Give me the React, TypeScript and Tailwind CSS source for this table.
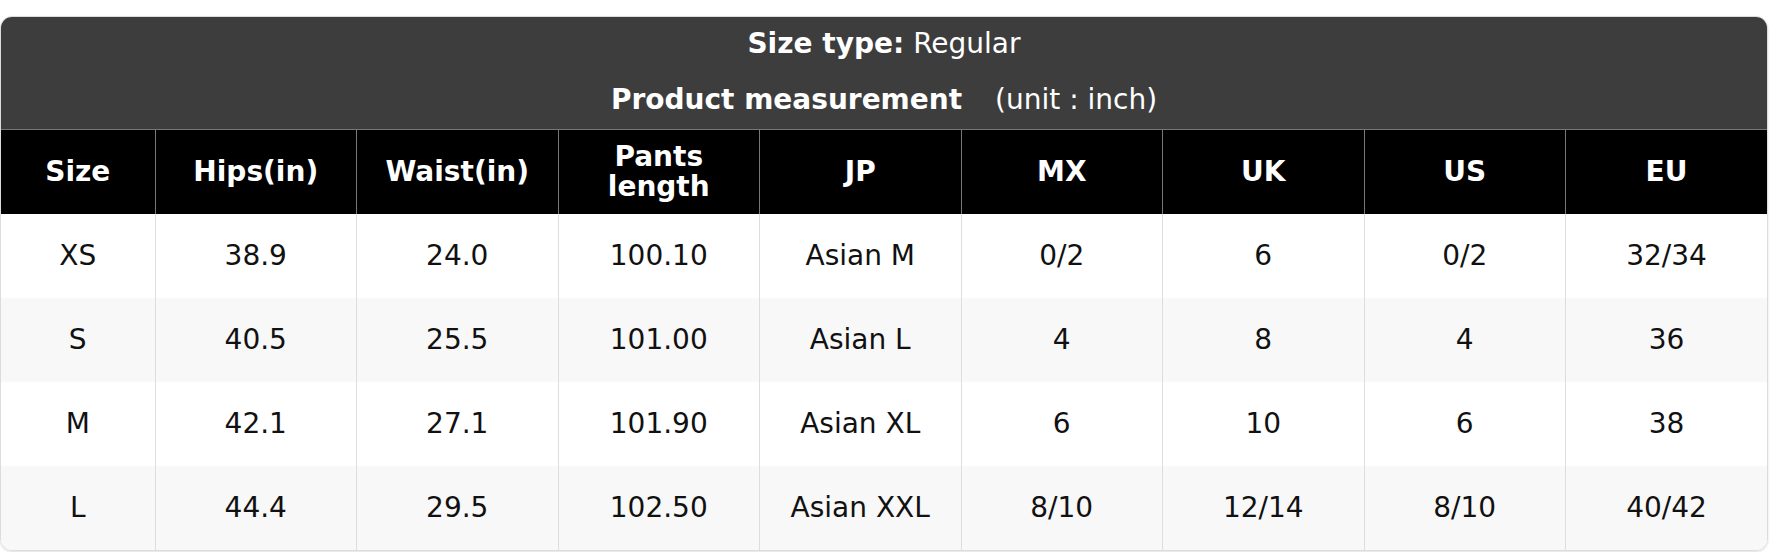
import React from "react";

const headers = ["Size", "Hips(in)", "Waist(in)", "Pants length", "JP", "MX", "UK", "US", "EU"];

const rows: string[][] = [
  ["XS", "38.9", "24.0", "100.10", "Asian M", "0/2", "6", "0/2", "32/34"],
  ["S", "40.5", "25.5", "101.00", "Asian L", "4", "8", "4", "36"],
  ["M", "42.1", "27.1", "101.90", "Asian XL", "6", "10", "6", "38"],
  ["L", "44.4", "29.5", "102.50", "Asian XXL", "8/10", "12/14", "8/10", "40/42"],
];

export default function App() {
  return (
    <div className="w-[1770px] h-[552px] bg-white pt-4 font-['DejaVu_Sans',sans-serif]">
      <div className="w-[1768px] rounded-xl border border-[#dcdcdc] shadow-sm overflow-hidden">
        {/* Title block */}
        <div className="bg-[#3d3d3d] text-white text-[28px] pt-[7px] pb-[9px]">
          <div className="h-[40px] flex items-center justify-center">
            <span className="font-bold">Size type:</span>
            <span className="ml-[9px]">Regular</span>
          </div>
          <div className="h-[40px] mt-4 flex items-center justify-center">
            <span className="font-bold">Product measurement</span>
            <span className="ml-[33px]">(unit : inch)</span>
          </div>
        </div>

        <table className="w-full table-fixed border-collapse text-[28px]">
          <colgroup>
            <col className="w-[154px]" />
            {headers.slice(1).map((h) => (
              <col key={h} />
            ))}
          </colgroup>
          <thead>
            <tr className="h-[84px] bg-black text-white">
              {headers.map((h, i) => (
                <th
                  key={h}
                  className={`font-bold leading-[30px] px-2 border-t border-[#777] ${i > 0 ? "border-l" : ""}`}
                >
                  {h === "Pants length" ? (
                    <>
                      Pants
                      <br />
                      length
                    </>
                  ) : (
                    h
                  )}
                </th>
              ))}
            </tr>
          </thead>
          <tbody>
            {rows.map((r, ri) => (
              <tr key={ri} className={`h-[84px] ${ri % 2 === 1 ? "bg-[#f8f8f8]" : "bg-white"}`}>
                {r.map((c, ci) => (
                  <td
                    key={ci}
                    className={`text-center text-[#111] ${ci > 0 ? "border-l border-[#dddddd]" : ""}`}
                  >
                    {c}
                  </td>
                ))}
              </tr>
            ))}
          </tbody>
        </table>
      </div>
    </div>
  );
}
